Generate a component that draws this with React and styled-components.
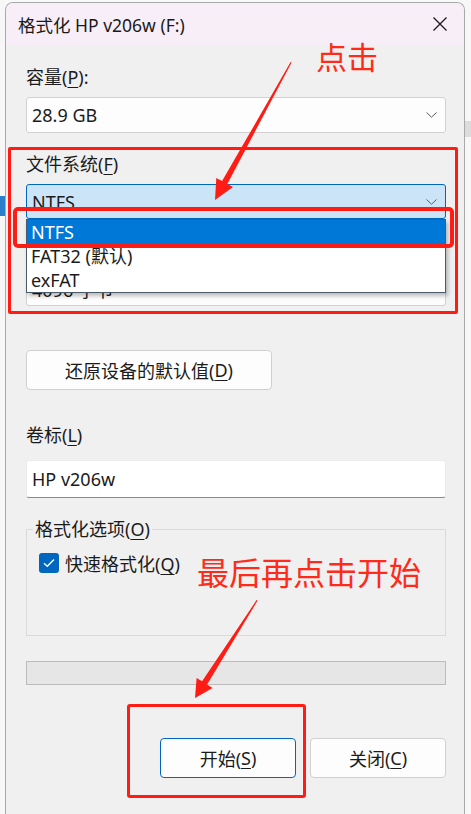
import React from "react";
import styled, { createGlobalStyle } from "styled-components";

const Global = createGlobalStyle`
  html, body { margin: 0; padding: 0; background: #f9f9f9; }
  body { font-family: "Noto Sans", "Noto Sans CJK SC", sans-serif; color: #1b1b1b; }
  * { box-sizing: border-box; }
`;

const Page = styled.div`
  position: relative;
  width: 471px;
  height: 814px;
  overflow: hidden;
  display: flex;
`;

const Gutter = styled.div`
  width: ${(p) => p.$w}px;
  flex: none;
  display: flex;
  flex-direction: column;
  background: #f7f7f7;
`;

const GutterBand = styled.div`
  margin-top: ${(p) => p.$top}px;
  height: ${(p) => p.$h}px;
  background: ${(p) => p.$c};
`;

const Window = styled.div`
  margin-top: 2px;
  width: 460px;
  flex: none;
  background: #f0f0f0;
  border: 1px solid #a9a9a9;
  border-bottom: none;
  border-radius: 8px 8px 0 0;
  overflow: hidden;
  display: flex;
  flex-direction: column;
`;

const TitleBar = styled.div`
  height: 42px;
  flex: none;
  background: #f8eef7;
  display: flex;
  align-items: center;
  justify-content: space-between;
  padding: 0 17px 0 12px;
  font-size: 17.5px;
  color: #1a1a1a;
`;

const Body = styled.div`
  display: flex;
  flex-direction: column;
  padding: 0 18px 0 20px;
  font-size: 18px;
`;

const Label = styled.div`
  height: 24px;
  line-height: 24px;
  margin-top: ${(p) => p.$mt}px;
  white-space: nowrap;
  visibility: ${(p) => (p.$hidden ? "hidden" : "visible")};
`;

const Key = styled.span`
  text-decoration: underline;
  text-decoration-thickness: 1px;
  text-underline-offset: 3px;
`;

const SelectWrap = styled.div`
  position: relative;
  margin-top: ${(p) => p.$mt}px;
`;

const Select = styled.div`
  height: ${(p) => p.$h || 35}px;
  display: flex;
  align-items: center;
  justify-content: space-between;
  padding: 0 8px 0 5px;
  background: ${(p) => (p.$focus ? "#cce4f7" : "#fdfdfd")};
  border: 1px solid ${(p) => (p.$focus ? "#0067c0" : "#d1d1d1")};
  border-radius: 3px;
`;

const DropList = styled.div`
  position: absolute;
  top: 100%;
  left: 0;
  right: 0;
  background: #ffffff;
  border: 1px solid #4a5a6a;
  box-shadow: 2px 3px 4px rgba(0, 0, 0, 0.25);
  z-index: 2;
`;

const DropItem = styled.div`
  height: 24px;
  line-height: 24px;
  padding-left: 4px;
  background: ${(p) => (p.$active ? "#0078d7" : "transparent")};
  color: ${(p) => (p.$active ? "#ffffff" : "#1b1b1b")};
`;

const Button = styled.div`
  width: ${(p) => p.$w}px;
  height: 40px;
  display: flex;
  align-items: center;
  justify-content: center;
  background: #fdfdfd;
  border: 1px solid ${(p) => (p.$primary ? "#0067c0" : "#d0d0d0")};
  border-radius: 4px;
  margin-top: ${(p) => p.$mt || 0}px;
`;

const TextInput = styled.div`
  margin-top: ${(p) => p.$mt}px;
  height: 38px;
  display: flex;
  align-items: center;
  padding-left: 5px;
  background: #ffffff;
  border: 1px solid #ececec;
  border-bottom: 1px solid #8a8a8a;
  border-radius: 3px;
`;

const Group = styled.fieldset`
  margin: 19px 0 0 0;
  padding: 0 0 0 12px;
  height: 119px;
  border: 1px solid #dadada;
  min-width: 0;
`;

const Legend = styled.legend`
  margin-left: -6px;
  padding: 0 2px;
  height: 24px;
  line-height: 24px;
`;

const CheckRow = styled.div`
  display: flex;
  align-items: center;
  gap: 6px;
  margin-top: 9px;
`;

const CheckBox = styled.div`
  width: 20px;
  height: 20px;
  border-radius: 3px;
  background: #0067c0;
  display: flex;
  align-items: center;
  justify-content: center;
`;

const Progress = styled.div`
  margin-top: 25px;
  height: 24px;
  background: #e6e6e6;
  border: 1px solid #bcbcbc;
`;

const ButtonRow = styled.div`
  margin-top: 53px;
  display: flex;
  justify-content: flex-end;
  gap: 14px;
`;

const Overlay = styled.div`
  position: absolute;
  left: ${(p) => p.$x}px;
  top: ${(p) => p.$y}px;
  width: ${(p) => p.$w}px;
  height: ${(p) => p.$h}px;
  border: ${(p) => p.$b}px solid #ff1c14;
  border-radius: ${(p) => p.$r}px;
  pointer-events: none;
  z-index: 5;
`;

const Note = styled.div`
  position: absolute;
  left: ${(p) => p.$x}px;
  top: ${(p) => p.$y}px;
  font-size: ${(p) => p.$s}px;
  line-height: 1;
  color: #ff2a1a;
  font-family: "Noto Sans CJK SC", sans-serif;
  white-space: nowrap;
  z-index: 5;
`;

const ArrowLayer = styled.svg`
  position: absolute;
  left: 0;
  top: 0;
  width: 471px;
  height: 814px;
  pointer-events: none;
  z-index: 6;
`;

const Chevron = () => (
  <svg width="11" height="6" viewBox="0 0 11 6">
    <path d="M0.5 0.5 L5.5 5.2 L10.5 0.5" fill="none" stroke="#5f5f5f" strokeWidth="1" />
  </svg>
);

export default function App() {
  return (
    <>
      <Global />
      <Page>
        <Gutter $w={5}>
          <GutterBand $top={196} $h={20} $c="#2a7fc8" />
        </Gutter>
        <Window>
          <TitleBar>
            <span>格式化 HP v206w (F:)</span>
            <svg width="14" height="14" viewBox="0 0 14 14">
              <path d="M0.5 0.5 L13.5 13.5 M13.5 0.5 L0.5 13.5" stroke="#1a1a1a" strokeWidth="1.3" />
            </svg>
          </TitleBar>
          <Body>
            <Label $mt={20}>
              容量(<Key>P</Key>):
            </Label>
            <SelectWrap $mt={8}>
              <Select $h={36}>
                <span>28.9 GB</span>
                <Chevron />
              </Select>
            </SelectWrap>
            <Label $mt={19}>
              文件系统(<Key>F</Key>)
            </Label>
            <SelectWrap $mt={8}>
              <Select $focus>
                <span>NTFS</span>
                <Chevron />
              </Select>
              <DropList>
                <DropItem $active>NTFS</DropItem>
                <DropItem>FAT32 (默认)</DropItem>
                <DropItem>exFAT</DropItem>
              </DropList>
            </SelectWrap>
            <Label $mt={20} $hidden>
              分配单元大小(<Key>A</Key>)
            </Label>
            <SelectWrap $mt={8}>
              <Select>
                <span>4096 字节</span>
                <Chevron />
              </Select>
            </SelectWrap>
            <Button $w={246} $mt={44}>
              还原设备的默认值(<Key>D</Key>)
            </Button>
            <Label $mt={33}>
              卷标(<Key>L</Key>)
            </Label>
            <TextInput $mt={13}>HP v206w</TextInput>
            <Group>
              <Legend>
                格式化选项(<Key>O</Key>)
              </Legend>
              <CheckRow>
                <CheckBox>
                  <svg width="12" height="10" viewBox="0 0 12 10">
                    <path d="M1 5.2 L4.3 8.3 L11 1.5" fill="none" stroke="#ffffff" strokeWidth="1.4" />
                  </svg>
                </CheckBox>
                <span>
                  快速格式化(<Key>Q</Key>)
                </span>
              </CheckRow>
            </Group>
            <Progress />
            <ButtonRow>
              <Button $w={136} $primary>
                开始(<Key>S</Key>)
              </Button>
              <Button $w={136}>
                关闭(<Key>C</Key>)
              </Button>
            </ButtonRow>
          </Body>
        </Window>
        <Gutter $w={6}>
          <GutterBand $top={121} $h={16} $c="#dcdcdc" />
        </Gutter>

        <Overlay $x={8} $y={147} $w={450} $h={167} $b={3} $r={2} />
        <Overlay $x={13} $y={207} $w={441} $h={41} $b={4} $r={5} />
        <Overlay $x={127} $y={704} $w={179} $h={94} $b={3} $r={3} />
        <Note $x={316} $y={40} $s={31}>点击</Note>
        <Note $x={197} $y={555} $s={32}>最后再点击开始</Note>
        <ArrowLayer viewBox="0 0 471 814">
          <polygon
            fill="#ff1c14"
            points="290.6,62 222.1,181.1 216.3,178 215,200 233,187 227.3,184 291.6,62.5"
          />
          <polygon
            fill="#ff1c14"
            points="256.6,600 202.1,681.2 196.6,678 195,698 212.6,688 207.1,684.4 257.6,600.6"
          />
        </ArrowLayer>
      </Page>
    </>
  );
}
